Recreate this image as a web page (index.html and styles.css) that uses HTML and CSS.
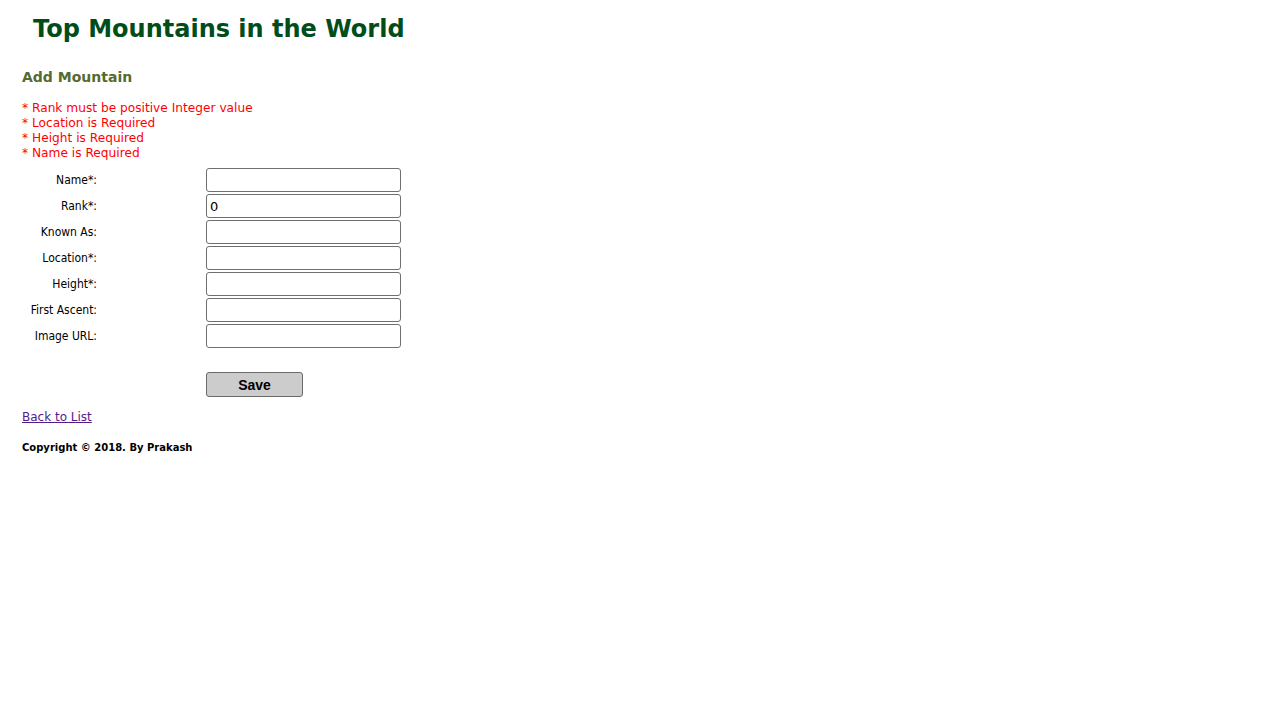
FILE: index.html
```html
<!DOCTYPE html>
<html>
<head>
<meta charset="utf-8">
<title>Add Mountain</title>
<link rel="stylesheet" href="styles.css">
</head>
<body>
<div class="header">
  <h1 class="title">Top Mountains in the World</h1>
</div>
<div class="content">
  <h2 class="subtitle">Add Mountain</h2>
  <ul class="errors">
    <li>* Rank must be positive Integer value</li>
    <li>* Location is Required</li>
    <li>* Height is Required</li>
    <li>* Name is Required</li>
  </ul>
  <form class="form">
    <div class="row"><label class="label">Name*:</label><input class="field" type="text"></div>
    <div class="row"><label class="label">Rank*:</label><input class="field" type="text" value="0"></div>
    <div class="row"><label class="label">Known As:</label><input class="field" type="text"></div>
    <div class="row"><label class="label">Location*:</label><input class="field" type="text"></div>
    <div class="row"><label class="label">Height*:</label><input class="field" type="text"></div>
    <div class="row"><label class="label">First Ascent:</label><input class="field" type="text"></div>
    <div class="row"><label class="label">Image URL:</label><input class="field" type="text"></div>
    <div class="row actions"><span class="label"></span><button class="save" type="button">Save</button></div>
  </form>
  <a class="back" href="#">Back to List</a>
  <p class="copyright">Copyright © 2018. By Prakash</p>
</div>
</body>
</html>
```
FILE: styles.css
```css
body {
  margin: 0;
  background: #fff;
  font-family: Verdana, "DejaVu Sans", sans-serif;
}
.header {
  padding: 13px 0 0 33px;
}
.title {
  margin: 0;
  font-size: 24px;
  font-weight: bold;
  color: #004d1a;
  line-height: 32px;
}
.content {
  padding-left: 22px;
}
.subtitle {
  margin: 23px 0 0 0;
  font-size: 14px;
  line-height: 18px;
  color: #556b2f;
}
.errors {
  list-style: none;
  margin: 15px 0 0 0;
  padding: 0;
  color: #ff0000;
  font-size: 12.2px;
  line-height: 15px;
}
.form {
  margin-top: 7px;
  display: flex;
  flex-direction: column;
  gap: 2px;
}
.row {
  display: grid;
  grid-template-columns: 75px 195px;
  column-gap: 109px;
  align-items: center;
}
.label {
  text-align: right;
  font-family: Tahoma, "DejaVu Sans Condensed", "DejaVu Sans", sans-serif;
  font-size: 12px;
  color: #000;
}
.field {
  box-sizing: border-box;
  width: 195px;
  height: 24px;
  margin: 0;
  padding: 0 3px;
  border: 1px solid #6f6f6f;
  border-radius: 3px;
  font-family: Verdana, "DejaVu Sans", sans-serif;
  font-size: 13px;
  color: #000;
  background: #fff;
}
.actions {
  margin-top: 22px;
}
.save {
  box-sizing: border-box;
  width: 97px;
  height: 25px;
  margin: 0;
  border: 1px solid #6a6a6a;
  border-radius: 3px;
  background: #cccccc;
  font-family: "Liberation Sans", Arial, sans-serif;
  font-weight: bold;
  font-size: 14px;
  color: #000;
}
.back {
  display: inline-block;
  margin-top: 12px;
  font-size: 12px;
  line-height: 16px;
  color: #551a8b;
}
.copyright {
  margin: 17px 0 0 0;
  font-size: 10px;
  font-weight: bold;
  color: #000;
}
```
